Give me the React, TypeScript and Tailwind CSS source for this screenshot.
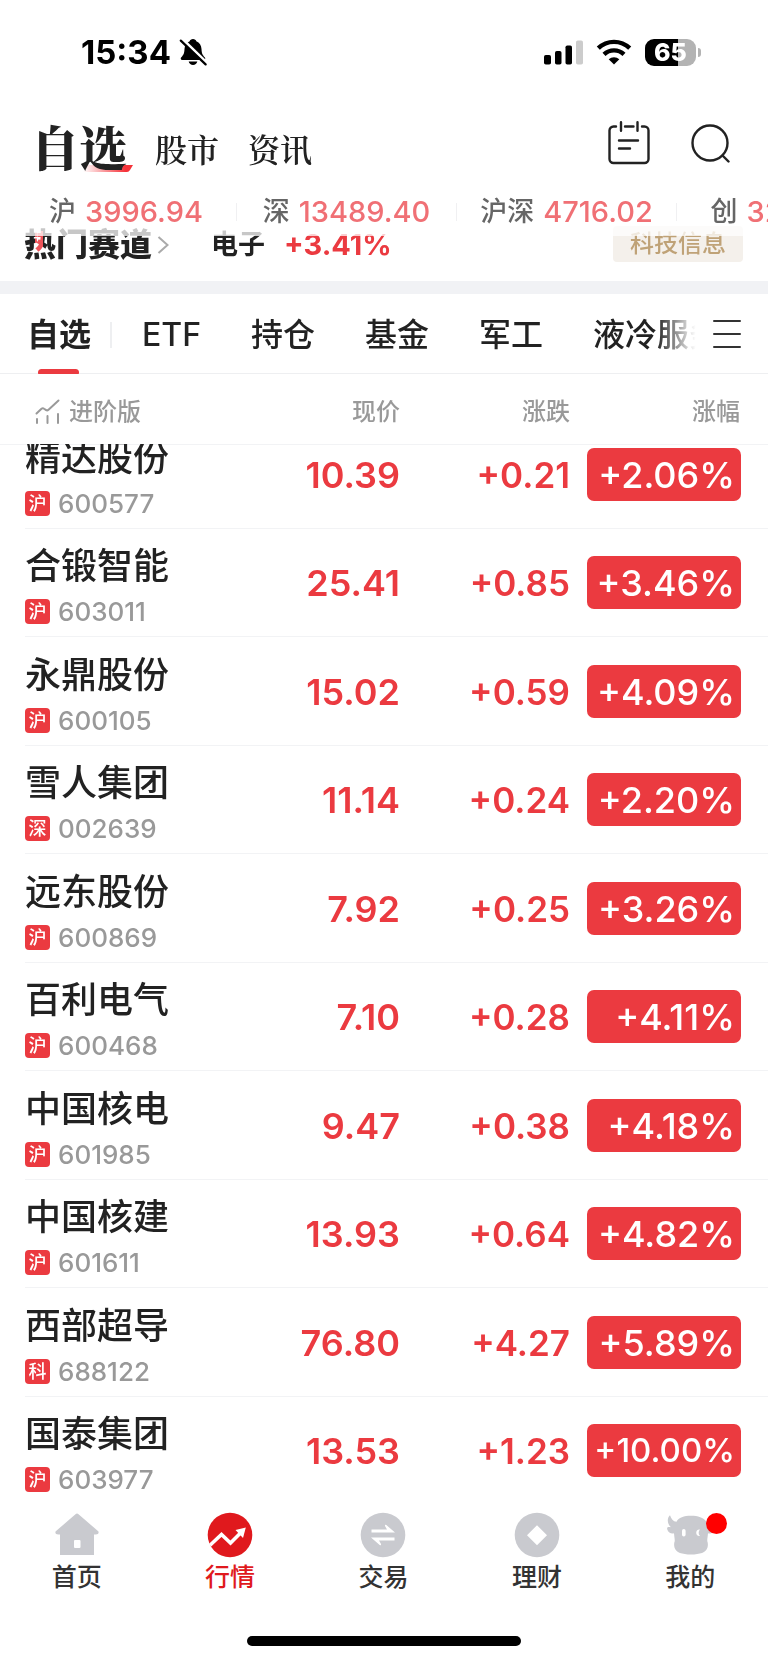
import React from "react";

type Stock = {
  name: string;
  market: string;
  code: string;
  price: string;
  change: string;
  pct: string;
};

const stocks: Stock[] = [
  { name: "精达股份", market: "沪", code: "600577", price: "10.39", change: "+0.21", pct: "+2.06%" },
  { name: "合锻智能", market: "沪", code: "603011", price: "25.41", change: "+0.85", pct: "+3.46%" },
  { name: "永鼎股份", market: "沪", code: "600105", price: "15.02", change: "+0.59", pct: "+4.09%" },
  { name: "雪人集团", market: "深", code: "002639", price: "11.14", change: "+0.24", pct: "+2.20%" },
  { name: "远东股份", market: "沪", code: "600869", price: "7.92", change: "+0.25", pct: "+3.26%" },
  { name: "百利电气", market: "沪", code: "600468", price: "7.10", change: "+0.28", pct: "+4.11%" },
  { name: "中国核电", market: "沪", code: "601985", price: "9.47", change: "+0.38", pct: "+4.18%" },
  { name: "中国核建", market: "沪", code: "601611", price: "13.93", change: "+0.64", pct: "+4.82%" },
  { name: "西部超导", market: "科", code: "688122", price: "76.80", change: "+4.27", pct: "+5.89%" },
  { name: "国泰集团", market: "沪", code: "603977", price: "13.53", change: "+1.23", pct: "+10.00%" },
];

const indices = [
  { name: "沪", value: "3996.94" },
  { name: "深", value: "13489.40" },
  { name: "沪深", value: "4716.02" },
  { name: "创", value: "3229.58" },
];

function StatusBar() {
  return (
    <div className="flex h-[104px] items-center justify-between pr-[67px] pl-[81px] text-black">
      <div className="flex items-center gap-2">
        <span className="text-[33px] leading-10 font-bold">15:34</span>
        <svg width="28" height="28" viewBox="0 0 28 28" aria-label="静音">
          <path
            d="M14 1c-1.700 0-3 1-3.300 2.200C7.400 4.500 5.700 7.400 5.500 11c-.2 4.500-1 6-3.200 8.200-1 1-.7 2.800 1 2.800h21.400c1.700 0 2-1.800 1-2.800-2.200-2.200-3-3.700-3.200-8.200-.2-3.600-1.900-6.500-5.200-7.800C17 2 15.700 1 14 1z"
            fill="#000"
          />
          <path d="M9.700 23.600h8.600c-.5 2-2.200 3.400-4.300 3.400s-3.800-1.400-4.300-3.400z" fill="#000" />
          <path d="M3 .8 28 25.200" stroke="#fff" strokeWidth="3" />
          <path d="M1.800 2.600 26.600 26.400" stroke="#000" strokeWidth="2.200" strokeLinecap="round" />
        </svg>
      </div>
      <div className="flex items-center gap-[13px]">
        <svg width="39" height="25" viewBox="0 0 39 25" aria-label="信号">
          <rect x="0" y="15" width="7" height="9.500" rx="1.800" />
          <rect x="11" y="11" width="6.500" height="13.500" rx="1.800" />
          <rect x="21.500" y="5.500" width="6.500" height="19" rx="1.800" />
          <rect x="32" y="0.500" width="7" height="24" rx="1.800" fill="#ccc" />
        </svg>
        <svg width="36" height="26" viewBox="0 0 36 26" aria-label="Wi-Fi">
          <path d="M2.300 9.200a22.600 22.600 0 0 1 31.400 0" fill="none" stroke="#000" strokeWidth="4.400" />
          <path d="M8 15.300a14.600 14.600 0 0 1 20 0" fill="none" stroke="#000" strokeWidth="4.400" />
          <path d="M18 25.500 12.700 20.300a7.600 7.600 0 0 1 10.600 0z" />
        </svg>
        <div className="flex items-center gap-[2px]">
          <div className="flex h-[27px] w-[51px] items-center justify-center rounded-[9px] bg-linear-to-r from-black from-65% to-[#b3b3b3] to-65% text-[25px] leading-none font-extrabold text-white">
            65
          </div>
          <div className="h-[9px] w-[3px] rounded-r-full bg-[#b3b3b3]" />
        </div>
      </div>
    </div>
  );
}

function TopNav() {
  return (
    <header className="flex h-[88px] items-center justify-between pr-[37px] pl-[31px]">
      <nav className="flex items-center pb-1 font-['Noto_Serif_CJK_SC','Noto_Sans_CJK_SC',serif] text-[#222]">
        <a href="#watch" className="relative mr-7 text-[48px] leading-[56px] font-black">
          <svg className="absolute right-[-6px] bottom-[2px]" width="50" height="7" viewBox="0 0 50 7" aria-hidden="true">
            <defs>
              <linearGradient id="accent">
                <stop offset="0" stopColor="#f5333a" stopOpacity="0" />
                <stop offset="0.85" stopColor="#f5333a" />
              </linearGradient>
            </defs>
            <path d="M4 0h46l-3 5q-1 2-3 2H0z" fill="url(#accent)" />
          </svg>
          <span className="relative">自选</span>
        </a>
        <a href="#market" className="mr-[29px] pt-1 text-[32px] leading-10 font-semibold">股市</a>
        <a href="#news" className="pt-1 text-[32px] leading-10 font-semibold">资讯</a>
      </nav>
      <div className="flex items-center gap-[41px] pb-[11px]">
        <button type="button" aria-label="日程">
          <svg width="42" height="44" viewBox="0 0 42 44" fill="none" stroke="#222" strokeWidth="2.400" strokeLinecap="round">
            <path d="M8 5.500H5.500A4 4 0 0 0 1.500 9.500v28.500a4 4 0 0 0 4 4h31a4 4 0 0 0 4-4V9.500a4 4 0 0 0-4-4H34M17 5.500h8.500M13 1.200v8.600M29.500 1.200v8.600M11 19.500h19M11 27.500h11" />
          </svg>
        </button>
        <button type="button" aria-label="搜索">
          <svg width="40" height="40" viewBox="0 0 40 40" fill="none" stroke="#222" strokeWidth="2.400" strokeLinecap="round">
            <circle cx="19" cy="20" r="17.500" />
            <path d="m31.500 32.500 6 6" />
          </svg>
        </button>
      </div>
    </header>
  );
}

function Ticker() {
  return (
    <div className="relative z-10 flex h-10 overflow-hidden pl-4">
      {indices.map((item, i) => (
        <div key={item.name} className="flex w-[220px] shrink-0 items-center">
          {i > 0 && <span className="h-[18px] w-px bg-[#f0f0f2]" />}
          <p className="flex flex-1 items-center justify-center gap-[9px] whitespace-nowrap">
            <span className="text-[27px] leading-10 font-medium text-[#666]">{item.name}</span>
            <span className="text-[29px] leading-10 font-medium text-[#f07075]">{item.value}</span>
          </p>
        </div>
      ))}
    </div>
  );
}

function HotTrack() {
  return (
    <section className="relative -mt-[14px] flex h-[63px] items-start pr-[25px] pl-6">
      <a href="#hot" className="flex h-[54px] items-center gap-[5px]">
        <span className="relative text-[32px] leading-10 font-black text-[#222]">
          热门赛道
          <span className="absolute top-[6px] left-[11px] h-[21px] w-2 bg-[#eb3a40] mix-blend-screen" />
        </span>
        <svg width="12" height="20" viewBox="0 0 12 20" fill="none" stroke="#aaa" strokeWidth="2">
          <path d="m1.500 2 9 8-9 8" />
        </svg>
      </a>
      <p className="ml-[42px] flex h-[54px] items-center gap-[19px] font-bold">
        <span className="text-[27px] leading-10 text-[#222]">电子</span>
        <span className="text-[29px] leading-10 text-[#eb3a40]">+3.41%</span>
      </p>
      <span className="mt-2 ml-auto rounded-[4px] bg-[#f4f0eb] px-[17px] text-[24px] leading-9 font-medium text-[#bfa277]">
        科技信息
      </span>
      <div className="absolute inset-x-0 top-0 h-[18px] bg-white/75" />
    </section>
  );
}

function GroupTabs() {
  return (
    <nav className="flex h-20 items-center border-b border-[#eeeff1] pr-[27px] pl-[27px] text-[32px] leading-10 font-medium text-[#222]">
      <div className="relative flex h-20 min-w-0 flex-1 items-center">
        <div className="flex min-w-0 flex-1 items-center gap-[50px] overflow-hidden pt-[2px] whitespace-nowrap">
          <a href="#all" className="font-bold">自选</a>
          <span className="-mr-5 -ml-[31px] h-[26px] w-[2px] shrink-0 bg-[#eeeff1]" />
          <a href="#etf">ETF</a>
          <a href="#hold">持仓</a>
          <a href="#fund">基金</a>
          <a href="#army">军工</a>
          <a href="#cool">液冷服务</a>
        </div>
        <span className="absolute -bottom-[2px] left-[11px] h-[7px] w-[41px] rounded-full bg-[#eb3a40]" />
        <span className="absolute inset-y-2 right-0 w-11 bg-linear-to-r from-white/0 to-white to-90%" />
      </div>
      <button type="button" aria-label="全部分组" className="ml-[13px] flex w-7 flex-col gap-[11px]">
        <span className="h-[2px] rounded bg-[#333]" />
        <span className="h-[2px] rounded bg-[#333]" />
        <span className="h-[2px] rounded bg-[#333]" />
      </button>
    </nav>
  );
}

function StockTable() {
  return (
    <table className="w-full table-fixed">
      <colgroup>
        <col />
        <col className="w-[199px]" />
        <col className="w-[170px]" />
        <col className="w-[198px]" />
      </colgroup>
      <thead className="relative z-10 bg-white text-[24px] leading-9 text-[#999]">
        <tr>
          <th className="border-b border-[#f2f3f5] p-0 text-left font-medium">
            <button type="button" className="flex h-[70px] items-center gap-2 pt-[5px] pl-[35px]">
              <svg width="26" height="26" viewBox="0 0 26 26" fill="none" stroke="#999" strokeWidth="2" strokeLinecap="round" strokeLinejoin="round">
                <path d="M1.500 14.500 6.500 9.700q1.300-1 2.600 0l2 1.400q1.200.7 2.400-.4L23.500 1.500M2 20v4M12.500 17v7M23 15v9" />
              </svg>
              进阶版
            </button>
          </th>
          <th className="border-b border-[#f2f3f5] p-0 pt-[5px] text-right font-medium">现价</th>
          <th className="border-b border-[#f2f3f5] p-0 pt-[5px] text-right font-medium">涨跌</th>
          <th className="border-b border-[#f2f3f5] p-0 pt-[5px] pr-7 text-right font-medium">涨幅</th>
        </tr>
      </thead>
      <tbody>
        {stocks.map((s, i) => (
          <tr
            key={s.code}
            className={i === 0 ? "group h-[84px]" : "group odd:h-[109px] even:h-[108px]"}
          >
            <td className="p-0 pl-[25px] align-bottom">
              <div className="h-[108px] border-b border-[#f2f3f5] pt-[17px] group-first:-mt-6 group-last:border-transparent">
                <p className="text-[36px] leading-10 font-medium whitespace-nowrap text-[#222]">{s.name}</p>
                <p className="mt-[13px] flex items-center gap-2">
                  <span className="flex size-[25px] items-center justify-center rounded-[4px] bg-[#eb3a40] text-[18px] leading-none font-medium text-white">
                    {s.market}
                  </span>
                  <span className="text-[26px] leading-6 font-medium text-[#999]">{s.code}</span>
                </p>
              </div>
            </td>
            <td className="p-0 align-bottom">
              <div className="flex h-[108px] items-center justify-end border-b border-[#f2f3f5] text-[36px] leading-10 font-semibold text-[#eb3a40] group-first:-mt-6 group-last:border-transparent">
                {s.price}
              </div>
            </td>
            <td className="p-0 align-bottom">
              <div className="flex h-[108px] items-center justify-end border-b border-[#f2f3f5] text-[35px] leading-10 font-semibold text-[#eb3a40] group-first:-mt-6 group-last:border-transparent">
                {s.change}
              </div>
            </td>
            <td className="p-0 align-bottom">
              <div className="flex h-[108px] items-center justify-end border-b border-[#f2f3f5] pr-[27px] group-first:-mt-6 group-last:border-transparent">
                <span
                  className={
                    s.pct.length > 6
                      ? "flex h-[53px] w-[154px] items-center justify-end rounded-[7px] bg-[#eb3a40] pr-[6px] text-[33px] font-medium text-white"
                      : "flex h-[53px] w-[154px] items-center justify-end rounded-[7px] bg-[#eb3a40] pr-[6px] text-[36px] font-medium text-white"
                  }
                >
                  {s.pct}
                </span>
              </div>
            </td>
          </tr>
        ))}
      </tbody>
    </table>
  );
}

function HomeIcon() {
  return (
    <svg width="46" height="46" viewBox="0 0 46 46" fill="#c9cacf">
      <path d="M21.500 2.200q1.500-1.200 3 0L44.500 19.500q.8 3-3 3H40V43H6V22.500H4.500q-3.800 0-3-3z" />
      <rect x="20" y="28" width="6.500" height="8" rx="1" fill="#fff" />
    </svg>
  );
}

function QuoteIcon() {
  return (
    <svg width="46" height="46" viewBox="0 0 46 46">
      <circle cx="23" cy="23" r="22.300" fill="#e0191d" />
      <path d="M3 33.200 14.500 22.500 23.500 31 34 20.500" fill="none" stroke="#fff" strokeWidth="3.600" />
      <path d="M28.500 18 38.800 15.600 36 26z" fill="#fff" />
    </svg>
  );
}

function TradeIcon() {
  return (
    <svg width="46" height="46" viewBox="0 0 46 46">
      <circle cx="23" cy="23" r="22.300" fill="#c9cacf" />
      <path
        d="M11.500 17.400H27L25 14q-.4-1.800 1.300-.9L35 20.600H11.500zM34.500 25.400H11L19.700 32.900q1.700.9 1.300-.9L19 28.600H34.500z"
        fill="#fff"
      />
    </svg>
  );
}

function WealthIcon() {
  return (
    <svg width="46" height="46" viewBox="0 0 46 46">
      <circle cx="23" cy="23" r="22.300" fill="#c9cacf" />
      <path d="M23 13.200 33 23.200 23 33.200 13 23.200z" fill="#fff" />
    </svg>
  );
}

function BullIcon() {
  return (
    <svg width="46" height="46" viewBox="-1 0 46 46" fill="#c9cacf">
      <path d="M2 3.200C-1 5.500-1.200 11.800 3 15.200-.2 14.800-1.200 15.500-.8 17.200.3 21 3.500 22 6 21.300 6.300 25 6.900 27.500 6.700 29.300 5.900 31.300 6 33.500 6.500 35.500 8 40.500 14 42.500 23 42.500S38 40.500 39.500 35.500C40 33.500 40.100 31.300 39.300 29.300 39.100 27.500 39.700 25 40 21.300 42.500 22 45.700 21 46.800 17.200 47.200 15.500 46.200 14.800 43 15.200 47.200 11.800 47 5.500 44 3.200 43 7.500 41.500 9 38.500 9.800 35.500 5.500 30 3.800 23 3.800S10.500 5.500 8.500 9.800C5 9.300 3.300 7 2 3.200z" />
      <rect x="14" y="17" width="3.600" height="7.500" rx="1.800" fill="#fff" />
      <path d="M32 17.500c-5-.8-5 7.300 0 6.500-1.800-1.500-1.800-5 0-6.500z" fill="#fff" />
    </svg>
  );
}

const bottomTabs = [
  { label: "首页", Icon: HomeIcon },
  { label: "行情", Icon: QuoteIcon },
  { label: "交易", Icon: TradeIcon },
  { label: "理财", Icon: WealthIcon },
  { label: "我的", Icon: BullIcon },
];

function BottomNav() {
  return (
    <footer className="relative z-10 bg-white pt-[7px] pb-4">
      <nav className="grid grid-cols-5 pr-px">
        {bottomTabs.map(({ label, Icon }) => (
          <a
            key={label}
            href={"#" + label}
            className={
              label === "行情"
                ? "flex flex-col items-center text-[25px] leading-[38px] font-medium text-[#e0191d]"
                : "flex flex-col items-center text-[25px] leading-[38px] font-medium text-[#333]"
            }
          >
            <span className="relative">
              <Icon />
              {label === "我的" && (
                <span className="absolute top-[1px] -right-[14px] size-[21px] rounded-full bg-[#f00]" />
              )}
            </span>
            {label}
          </a>
        ))}
      </nav>
      <div className="mx-auto mt-[40px] h-[10px] w-[274px] rounded-full bg-black" />
    </footer>
  );
}

export default function App() {
  return (
    <div className="min-h-screen overflow-hidden bg-white font-[Inter,'Noto_Sans_CJK_SC',sans-serif]">
      <StatusBar />
      <TopNav />
      <Ticker />
      <HotTrack />
      <div className="h-[13px] bg-[#f1f2f5]" />
      <GroupTabs />
      <StockTable />
      <BottomNav />
    </div>
  );
}
